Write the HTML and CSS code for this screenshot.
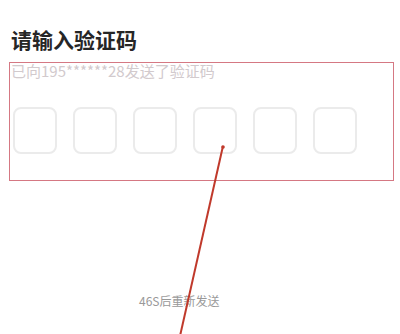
FILE: index.html
```html
<!DOCTYPE html>
<html lang="zh">
<head>
<meta charset="utf-8">
<link rel="stylesheet" href="styles.css">
</head>
<body>
<div class="page">
  <h1 class="title">请输入验证码</h1>
  <p class="sub">已向195******28发送了验证码</p>
  <div class="codes">
    <div class="box"></div>
    <div class="box"></div>
    <div class="box"></div>
    <div class="box"></div>
    <div class="box"></div>
    <div class="box"></div>
  </div>
  <p class="resend">46S后重新发送</p>
  <div class="mark-rect"></div>
  <svg class="mark-line" width="400" height="334" viewBox="0 0 400 334">
    <line x1="223" y1="146" x2="180" y2="336" stroke="#c0392b" stroke-width="2"/>
    <circle cx="223" cy="147" r="1.8" fill="#c0392b"/>
  </svg>
</div>
</body>
</html>
```
FILE: styles.css
```css
html, body {
  margin: 0;
  padding: 0;
  background: #ffffff;
}
.page {
  position: relative;
  width: 400px;
  height: 334px;
  overflow: hidden;
  font-family: "Noto Sans CJK SC", "Noto Sans", sans-serif;
}
.title {
  margin: 0;
  padding: 25px 0 0 11px;
  font-size: 21px;
  line-height: 28px;
  font-weight: 700;
  color: #262626;
}
.sub {
  margin: 8px 0 0 11px;
  font-size: 15px;
  line-height: 20px;
  color: #d2cacd;
}
.codes {
  display: flex;
  gap: 16px;
  margin: 26px 0 0 13px;
}
.box {
  width: 40px;
  height: 43px;
  border: 2px solid #ebebeb;
  border-radius: 8px;
}
.resend {
  margin: 139px 0 0 139px;
  font-size: 12px;
  line-height: 16px;
  color: #999999;
}
.mark-rect {
  position: absolute;
  left: 9px;
  top: 62px;
  width: 383px;
  height: 117px;
  border: 1.5px solid #d57883;
}
.mark-line {
  position: absolute;
  left: 0;
  top: 0;
  pointer-events: none;
}
```
